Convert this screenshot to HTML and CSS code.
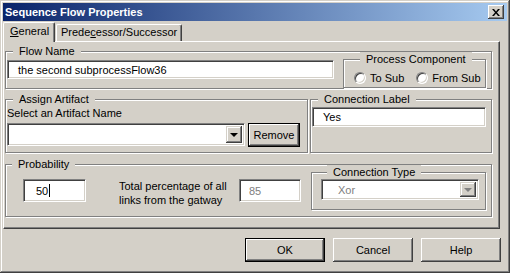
FILE: index.html
```html
<!DOCTYPE html>
<html lang="en">
<head>
  <meta charset="UTF-8" />
  <title>Sequence Flow Properties</title>
  <link rel="stylesheet" href="styles.css">
</head>
<body>
  <div class="window">
    <div class="titlebar">
      <span class="title">Sequence Flow Properties</span>
      <div class="close-btn">
        <svg width="8" height="7" viewBox="0 0 8 7">
          <path d="M0 0h2l2 2.5 2-2.5h2l-3 3.5 3 3.5h-2l-2-2.5-2 2.5h-2l3-3.5z" fill="#000"/>
        </svg>
      </div>
    </div>

    <!-- tab strip -->
    <div class="tabs">
      <div class="tab active"><u>G</u>eneral</div>
      <div class="tab">Prede<u>c</u>essor/Successor</div>
    </div>

    <div class="panel">
      <fieldset class="group flow-group">
        <legend>Flow Name</legend>
        <div class="row">
          <div class="textbox name-box">the second subprocessFlow36</div>
          <fieldset class="group process-group">
            <legend>Process Component</legend>
            <div class="radios">
              <label class="radio"><span class="radio-dot"></span>To Sub</label>
              <label class="radio"><span class="radio-dot"></span>From Sub</label>
            </div>
          </fieldset>
        </div>
      </fieldset>

      <div class="row middle-row">
        <fieldset class="group artifact-group">
          <legend>Assign Artifact</legend>
          <div class="field-label">Select an Artifact Name</div>
          <div class="row artifact-row">
            <div class="combo artifact-combo">
              <span class="combo-text"></span>
              <span class="combo-btn"><span class="arrow"></span></span>
            </div>
            <div class="button default remove-btn">Remove</div>
          </div>
        </fieldset>
        <fieldset class="group label-group">
          <legend>Connection Label</legend>
          <div class="textbox label-box">Yes</div>
        </fieldset>
      </div>

      <fieldset class="group prob-group">
        <legend>Probability</legend>
        <div class="row">
          <div class="textbox prob-box">50<span class="caret"></span></div>
          <div class="total-text">Total percentage of all links from the gatway</div>
          <div class="textbox total-box">85</div>
          <fieldset class="group type-group">
            <legend>Connection Type</legend>
            <div class="combo type-combo disabled">
              <span class="combo-text">Xor</span>
              <span class="combo-btn"><span class="arrow"></span></span>
            </div>
          </fieldset>
        </div>
      </fieldset>
    </div>

    <div class="buttons">
      <div class="button default">OK</div>
      <div class="button">Cancel</div>
      <div class="button">Help</div>
    </div>
  </div>
</body>
</html>
```

FILE: styles.css
```css
* {
  box-sizing: border-box;
}

body {
  margin: 0;
  font-family: "Liberation Sans", Arial, sans-serif;
  font-size: 11px;
  color: #000;
  background: #d4d0c8;
}

.window {
  width: 510px;
  height: 273px;
  padding: 3px;
  background: #d4d0c8;
  box-shadow: inset -1px -1px #404040, inset 1px 1px #d4d0c8,
              inset -2px -2px #808080, inset 2px 2px #fff;
}

/* title bar */
.titlebar {
  height: 18px;
  display: flex;
  align-items: center;
  justify-content: space-between;
  padding: 0 3px 0 2px;
  background: linear-gradient(to right, #0a246a, #a6caf0);
}

.title {
  color: #fff;
  font-weight: bold;
  font-size: 11px;
}

.close-btn {
  width: 16px;
  height: 14px;
  display: flex;
  align-items: center;
  justify-content: center;
  background: #d4d0c8;
  box-shadow: inset -1px -1px #404040, inset 1px 1px #fff,
              inset -2px -2px #808080;
}

/* tabs */
.tabs {
  display: flex;
  align-items: flex-end;
  margin-top: 1px;
}

.tab {
  height: 17px;
  line-height: 15px;
  padding: 0 4px 0 4px;
  border: 1px solid #fff;
  border-bottom: none;
  border-right: 1px solid #404040;
  border-radius: 2px 2px 0 0;
  box-shadow: inset -1px 0 #808080;
  white-space: nowrap;
}

.tab.active {
  position: relative;
  z-index: 1;
  height: 20px;
  width: 52px;
  margin-bottom: -1px;
  padding-left: 6px;
  background: #d4d0c8;
  line-height: 17px;
}

.tab:not(.active) {
  margin-left: 1px;
}

/* tab page */
.panel {
  width: 497px;
  height: 188px;
  padding: 2px 7px 0 1px;
  border: 1px solid;
  border-color: #fff #404040 #404040 #fff;
  box-shadow: inset -1px -1px #808080;
}

.row {
  display: flex;
  align-items: flex-start;
}

/* etched group boxes */
.group {
  margin: 0;
  padding: 0;
  border: 1px solid #808080;
  box-shadow: 1px 1px 0 #fff, inset 1px 1px 0 #fff;
  min-width: 0;
}

.group legend {
  margin-left: 6px;
  padding: 0 6px;
  line-height: 14px;
  background: #d4d0c8;
}

.flow-group {
  padding: 0 5px 0 1px;
}

.name-box {
  width: 327px;
  height: 19px;
  margin-top: 2px;
  padding-left: 10px;
}

.process-group {
  width: 143px;
  height: 36px;
  margin: -6px 0 0 9px;
  padding-left: 10px;
}

.radios {
  display: flex;
  gap: 12px;
  margin-top: 6px;
}

.radio {
  display: flex;
  align-items: center;
  gap: 4px;
  line-height: 12px;
}

.radio-dot {
  width: 12px;
  height: 12px;
  border-radius: 50%;
  background: #fff;
  border: 1px solid;
  border-color: #808080 #fff #fff #808080;
  box-shadow: inset 1px 1px #404040, inset -1px -1px #d4d0c8;
}

.middle-row {
  margin-top: 3px;
  gap: 2px;
  align-items: stretch;
}

.artifact-group {
  width: 303px;
  height: 61px;
  padding: 0 0 0 1px;
}

.field-label {
  line-height: 14px;
}

.artifact-row {
  margin-top: 3px;
  gap: 3px;
}

.artifact-combo {
  width: 238px;
  height: 23px;
}

.remove-btn {
  width: 52px;
  height: 24px;
}

.label-group {
  width: 182px;
  padding: 0 0 0 1px;
}

.label-box {
  width: 174px;
  height: 20px;
  margin-top: 1px;
  padding-left: 10px;
}

.prob-group {
  height: 60px;
  margin-top: 4px;
  padding: 0;
}

.prob-box {
  width: 63px;
  height: 23px;
  margin: 8px 0 0 17px;
  padding-left: 12px;
}

.caret {
  display: inline-block;
  width: 1px;
  height: 13px;
  margin-left: 1px;
  background: #000;
  vertical-align: -2px;
}

.total-text {
  width: 120px;
  margin: 8px 0 0 33px;
  padding-right: 8px;
  line-height: 14px;
}

.total-box {
  width: 62px;
  height: 23px;
  margin-top: 8px;
  padding-left: 9px;
  color: #808080;
}

.type-group {
  width: 175px;
  height: 45px;
  margin: -6px 0 0 10px;
  padding-left: 9px;
}

.type-combo {
  width: 158px;
  height: 21px;
}

/* sunken white fields */
.textbox, .combo {
  display: flex;
  align-items: center;
  background: #fff;
  border: 1px solid;
  border-color: #808080 #fff #fff #808080;
  box-shadow: inset 1px 1px #404040, inset -1px -1px #d4d0c8;
  white-space: nowrap;
}

.combo {
  padding: 2px;
  justify-content: space-between;
}

.combo-text {
  padding-left: 14px;
}

.combo.disabled .combo-text {
  color: #808080;
}

.combo-btn {
  width: 16px;
  height: 100%;
  display: flex;
  align-items: center;
  justify-content: center;
  background: #d4d0c8;
  box-shadow: inset -1px -1px #404040, inset 1px 1px #d4d0c8,
              inset -2px -2px #808080, inset 2px 2px #fff;
}

.arrow {
  width: 0;
  height: 0;
  border-left: 4px solid transparent;
  border-right: 4px solid transparent;
  border-top: 4px solid #000;
}

.combo.disabled .arrow {
  border-top-color: #808080;
}

/* push buttons */
.button {
  display: flex;
  align-items: center;
  justify-content: center;
  background: #d4d0c8;
  box-shadow: inset -1px -1px #404040, inset 1px 1px #fff,
              inset -2px -2px #808080, inset 2px 2px #d4d0c8;
}

.button.default {
  border: 1px solid #000;
  box-shadow: inset -1px -1px #404040, inset 1px 1px #fff,
              inset -2px -2px #808080;
}

.buttons {
  display: flex;
  justify-content: flex-end;
  gap: 8px;
  margin-top: 9px;
  padding-right: 6px;
}

.buttons .button {
  width: 80px;
  height: 24px;
}
```
